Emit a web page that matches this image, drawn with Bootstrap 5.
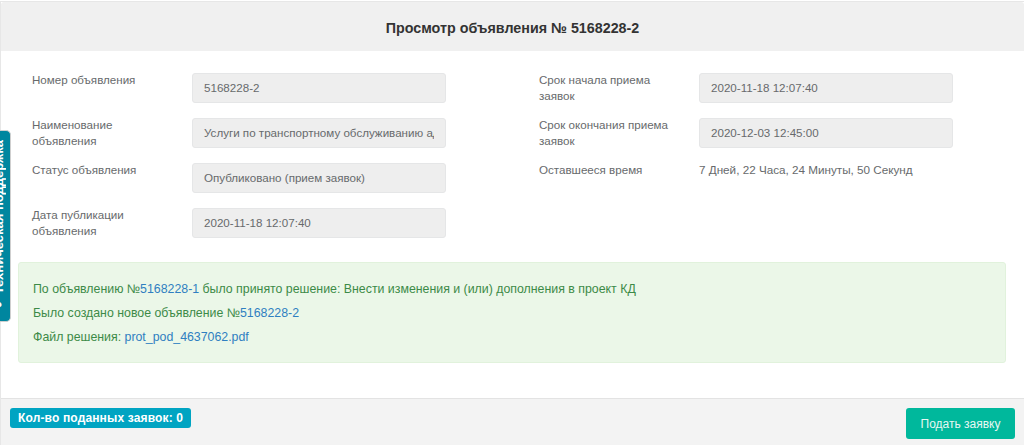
<!DOCTYPE html>
<html lang="ru"><head><meta charset="utf-8">
<link rel="stylesheet" href="https://cdn.jsdelivr.net/npm/bootstrap@5.3.0/dist/css/bootstrap.min.css">
<style>
html,body{height:445px;overflow:hidden;background:#fff}
body{font-family:"Liberation Sans",Arial,sans-serif;font-size:11.6px;line-height:17px;color:#676a6c}
.shell{height:445px;border:1px solid #e7e7e7;border-bottom:0;border-right:0;margin-top:1px}
.head-bar{background:#f0f0f0;height:49px;color:#333;font-size:14.3px;font-weight:700;line-height:52px;border-radius:3px 3px 0 0}
.form-area{padding:21px 0 0 0;height:211px}
.side-l{width:507px;padding-left:31px}
.side-r{width:516px;padding-left:31px}
.info-row{height:45px;display:flex;align-items:flex-start}
.lab-l{width:160px;line-height:16px;padding-right:30px;flex:none}
.lab-r{width:160px;line-height:16px;padding-right:20px;flex:none}
.fake-input{width:254px;height:30px;margin-top:1px;background:#eee;border:1px solid #e5e6e7;border-radius:3px;padding:0 11px;line-height:27px;color:#676a6c;white-space:nowrap;overflow:hidden;flex:none}
.fake-input span{display:block;overflow:hidden}
.time-left{font-size:11.7px;line-height:16px}
.note-box{margin:0 18px 0 17px;height:101px;background:#ebf7e8;border:1px solid #e1f2dc;border-radius:3px;color:#3c8a47;font-size:12.35px;padding:14px 14px 0;line-height:24px;width:988px}
.note-box a{color:#2f7fc1;text-decoration:none}
.foot-bar{position:absolute;left:1px;right:0;top:398px;height:47px;background:#f3f3f3;border-top:1px solid #e3e3e3}
.count-tag{position:absolute;left:9px;top:9px;background:#00a4c2;color:#fff;font-size:12px;font-weight:700;line-height:20px;height:20px;padding:0 8px;border-radius:3px;letter-spacing:.15px}
.send-btn{position:absolute;left:905px;top:9px;width:109px;height:31px;background:#00b89c;border:0;color:#e6f7f3;font-size:12px;padding:0;border-radius:3px}
.side-tab{position:absolute;left:-1px;top:130px;width:12px;height:192px;background:#00869f;border:1px solid #cfcfcf;border-left:0;border-radius:0 5px 5px 0;overflow:hidden}
.side-tab span{position:absolute;left:-6px;bottom:8px;writing-mode:vertical-rl;transform:rotate(180deg);color:#fff;font-weight:700;font-size:13px;line-height:12px;white-space:nowrap}
</style></head><body>
<div class="shell position-relative">
<div class="head-bar text-center">Просмотр объявления № 5168228-2</div>
<div class="form-area d-flex">
<div class="side-l">
<div class="info-row"><div class="lab-l">Номер объявления</div><div class="fake-input">5168228-2</div></div>
<div class="info-row"><div class="lab-l">Наименование объявления</div><div class="fake-input"><span>Услуги по транспортному обслуживанию административного</span></div></div>
<div class="info-row"><div class="lab-l">Статус объявления</div><div class="fake-input">Опубликовано (прием заявок)</div></div>
<div class="info-row"><div class="lab-l">Дата публикации объявления</div><div class="fake-input">2020-11-18 12:07:40</div></div>
</div>
<div class="side-r">
<div class="info-row"><div class="lab-r">Срок начала приема заявок</div><div class="fake-input">2020-11-18 12:07:40</div></div>
<div class="info-row"><div class="lab-r">Срок окончания приема заявок</div><div class="fake-input">2020-12-03 12:45:00</div></div>
<div class="info-row"><div class="lab-r">Оставшееся время</div><div class="time-left">7 Дней, 22 Часа, 24 Минуты, 50 Секунд</div></div>
</div>
</div>
<div class="note-box">
<div>По объявлению №<a href="#">5168228-1</a> было принято решение: Внести изменения и (или) дополнения в проект КД</div>
<div>Было создано новое объявление №<a href="#">5168228-2</a></div>
<div>Файл решения: <a href="#">prot_pod_4637062.pdf</a></div>
</div>
</div>
<div class="foot-bar"><span class="count-tag">Кол-во поданных заявок: 0</span><button class="btn send-btn" type="button">Подать заявку</button></div>
<div class="side-tab"><span>● Техническая поддержка</span></div>
<script src="https://cdn.jsdelivr.net/npm/bootstrap@5.3.0/dist/js/bootstrap.bundle.min.js"></script>
</body></html>
